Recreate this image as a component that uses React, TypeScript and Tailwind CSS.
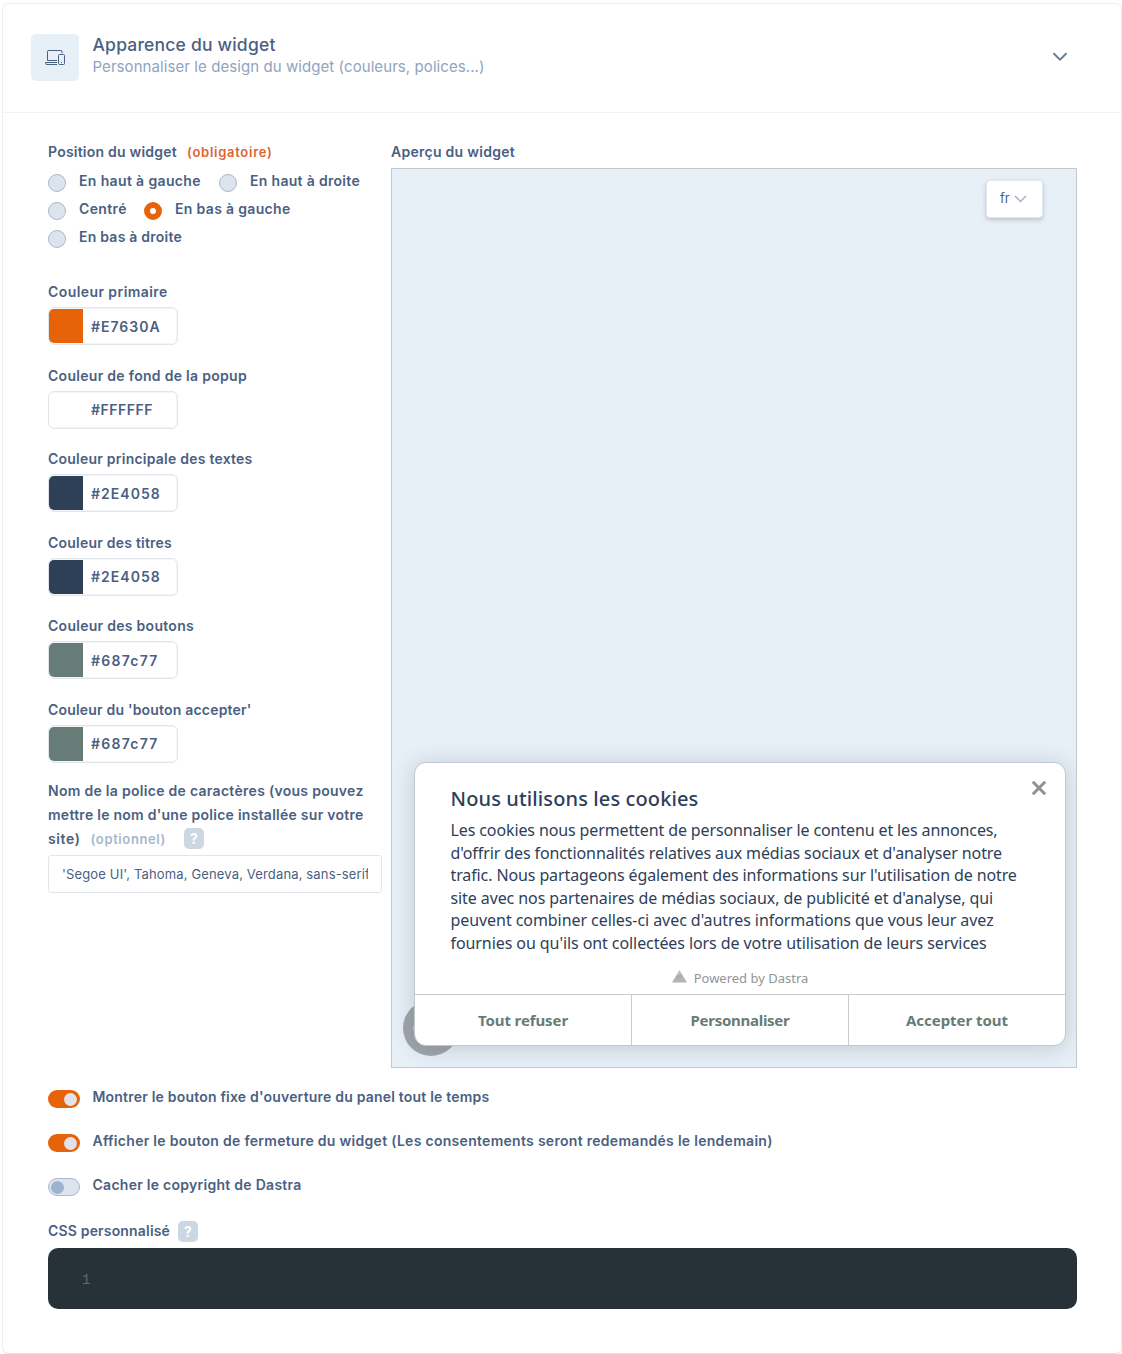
import React from "react";

const radioRows = [
  [
    { label: "En haut à gauche", cls: "w-[171px] tracking-[0.36px]", on: false },
    { label: "En haut à droite", cls: "w-[150px] tracking-[0.31px]", on: false },
  ],
  [
    { label: "Centré", cls: "w-[96px] tracking-[0.38px]", on: false },
    { label: "En bas à gauche", cls: "w-[160px] tracking-[0.33px]", on: true },
  ],
  [{ label: "En bas à droite", cls: "w-[160px] tracking-[0.23px]", on: false }],
];

const colors = [
  { label: "Couleur primaire", cls: "tracking-[0.42px]", hex: "#E7630A", swatch: "bg-[#e7630a]", hexCls: "tracking-[1px]" },
  { label: "Couleur de fond de la popup", cls: "tracking-[0.29px]", hex: "#FFFFFF", swatch: "bg-white", hexCls: "tracking-[0.5px]" },
  { label: "Couleur principale des textes", cls: "tracking-[0.23px]", hex: "#2E4058", swatch: "bg-[#2e4058]", hexCls: "tracking-[1.05px]" },
  { label: "Couleur des titres", cls: "tracking-[0.22px]", hex: "#2E4058", swatch: "bg-[#2e4058]", hexCls: "tracking-[1.05px]" },
  { label: "Couleur des boutons", cls: "tracking-[0.28px]", hex: "#687c77", swatch: "bg-[#687c77]", hexCls: "tracking-[1.25px]" },
  { label: "Couleur du 'bouton accepter'", cls: "tracking-[0.19px]", hex: "#687c77", swatch: "bg-[#687c77]", hexCls: "tracking-[1.25px]" },
];

const cookieLines = [
  { text: "Les cookies nous permettent de personnaliser le contenu et les annonces,", cls: "tracking-[-0.117px]" },
  { text: "d'offrir des fonctionnalités relatives aux médias sociaux et d'analyser notre", cls: "tracking-[-0.105px]" },
  { text: "trafic. Nous partageons également des informations sur l'utilisation de notre", cls: "tracking-[-0.112px]" },
  { text: "site avec nos partenaires de médias sociaux, de publicité et d'analyse, qui", cls: "tracking-[-0.095px]" },
  { text: "peuvent combiner celles-ci avec d'autres informations que vous leur avez", cls: "tracking-[-0.065px]" },
  { text: "fournies ou qu'ils ont collectées lors de votre utilisation de leurs services", cls: "tracking-[-0.08px]" },
];

const toggles = [
  { label: "Montrer le bouton fixe d'ouverture du panel tout le temps", cls: "tracking-[0.2px]", on: true },
  { label: "Afficher le bouton de fermeture du widget (Les consentements seront redemandés le lendemain)", cls: "tracking-[0.29px]", on: true },
  { label: "Cacher le copyright de Dastra", cls: "tracking-[0.27px]", on: false },
];

function Help({ className }: { className: string }) {
  return (
    <span className={`inline-flex h-[21px] w-5 items-center justify-center rounded-[5px] bg-[#cdd6e3] text-[14px] font-bold text-white ${className}`}>
      ?
    </span>
  );
}

function DevicesIcon() {
  return (
    <svg width="22" height="18" viewBox="0 0 22 18" fill="none" stroke="#4a6082" strokeWidth="1">
      <path d="M18 4.2V2.6Q18 1.5 17 1.5H4Q3.5 1.5 3.5 2.6V11.5H13" />
      <path d="M13 13.5H1.5V14.2Q1.5 15.5 3 15.5H13" />
      <rect x="14.5" y="5.5" width="6" height="10" rx="1" />
      <path d="M17 13.5H18" />
    </svg>
  );
}

function Header() {
  return (
    <header className="flex h-[109px] items-start border-b border-[#f1f2f4] pl-7 pt-[30px]">
      <div className="flex h-[47px] w-12 items-center justify-center rounded-[5px] bg-[#e7eff7]">
        <DevicesIcon />
      </div>
      <div className="-mt-px ml-[13.5px] whitespace-nowrap">
        <h1 className="h-[23px] text-[17.5px] font-medium leading-[23px] tracking-[0.2px]">Apparence du widget</h1>
        <p className="text-[15px] font-normal leading-[21px] tracking-[0.076px] text-[#91a3c0]">
          Personnaliser le design du widget (couleurs, polices...)
        </p>
      </div>
      <svg className="ml-auto mr-[53px] mt-[18px]" width="16" height="10" viewBox="0 0 16 10" fill="none" stroke="#6b7a99" strokeWidth="2">
        <path d="M1.5 1.2L8 7.7L14.5 1.2" />
      </svg>
    </header>
  );
}

function Settings() {
  return (
    <div className="w-[343px] shrink-0 whitespace-nowrap">
      <div className="flex h-[30px] pt-px leading-6">
        <span className="tracking-[0.22px]">Position du widget</span>
        <span className="ml-[10px] text-[13px] tracking-[0.72px] text-[#dc6530]">(obligatoire)</span>
      </div>
      {radioRows.map((row, i) => (
        <div key={i} className="flex h-7">
          {row.map((r) => (
            <label key={r.label} className={`flex items-center ${r.cls}`}>
              {r.on ? (
                <span className="size-[18px] shrink-0 rounded-full border-[6px] border-[#e7630a] bg-white" />
              ) : (
                <span className="size-[18px] shrink-0 rounded-full border border-[#a9b9ce] bg-[#dde4ee]" />
              )}
              <span className="mb-[5px] ml-[13px]">{r.label}</span>
            </label>
          ))}
        </div>
      ))}
      <div className="mt-[27px]">
        {colors.map((c) => (
          <div key={c.label} className="h-[83.5px]">
            <div className={`h-[27.4px] leading-6 ${c.cls}`}>{c.label}</div>
            <div className="flex h-[38px] w-[130px] items-center overflow-hidden rounded-[6px] border border-[#e1e6ed] bg-white shadow-[inset_0_0_0_1px_#f3f5f8]">
              <span className={`h-[34px] w-[34px] rounded-l-[5px] ${c.swatch}`} />
              <span className={`ml-2 text-[14px] ${c.hexCls}`}>{c.hex}</span>
            </div>
          </div>
        ))}
      </div>
      <div className="-mt-[2px] leading-6">
        <div className="tracking-[0.29px]">Nom de la police de caractères (vous pouvez</div>
        <div className="tracking-[0.26px]">mettre le nom d'une police installée sur votre</div>
        <div className="flex h-6 items-center">
          <span className="tracking-[0.6px]">site)</span>
          <span className="ml-[10px] text-[13px] tracking-[0.62px] text-[#a5b6cc]">(optionnel)</span>
          <Help className="-mt-px ml-[18px]" />
        </div>
      </div>
      <div className="mt-1 h-[38px] w-[334px] rounded-[3px] border border-[#e2e6ec]">
        <input
          className="h-full w-full bg-transparent px-[13px] text-[13px] font-normal tracking-[0.146px] outline-none"
          defaultValue="'Segoe UI', Tahoma, Geneva, Verdana, sans-serif"
        />
      </div>
    </div>
  );
}

function CookiePopup() {
  return (
    <div className="absolute bottom-[21px] left-[22px] flex h-[284px] w-[652px] flex-col overflow-hidden rounded-[12px] border border-[#c3c8cc] bg-white font-['Noto_Sans',sans-serif] font-normal text-[#2e4058] shadow-[0_2px_22px_rgba(60,80,100,0.22)]">
      <svg className="absolute right-[18px] top-[17px]" width="16" height="16" viewBox="0 0 16 16" fill="none" stroke="#8e9296" strokeWidth="3">
        <path d="M1.8 1.8L14.2 14.2M14.2 1.8L1.8 14.2" />
      </svg>
      <div className="h-[231px] whitespace-nowrap pl-[35.5px] pt-[21.5px]">
        <h2 className="h-[34.5px] text-[20px] font-medium leading-[28px] tracking-[0.12px]">Nous utilisons les cookies</h2>
        <div className="text-[16px] leading-[22.5px]">
          {cookieLines.map((l) => (
            <div key={l.text} className={l.cls}>{l.text}</div>
          ))}
        </div>
      </div>
      <div className="-mt-[27px] flex h-[27px] items-start justify-center text-[13px] leading-[22px] text-[#929496]">
        <svg className="mr-[7px] mt-[3px]" width="15" height="13" viewBox="0 0 15 13">
          <path d="M7.5 0L11.2 6.3H3.7Z" fill="#bfc1c3" />
          <path d="M3.7 6.3L9 4L12 7.8L3 9Z" fill="#a9abad" />
          <path d="M3 7.6L11.6 6.8L15 12.6H0Z" fill="#b2b4b6" />
        </svg>
        Powered by Dastra
      </div>
      <div className="flex h-[51px] border-t border-[#c8cccf] text-[15px] font-bold text-[#687c77]">
        <button className="w-[217px] border-r border-[#c8cccf] tracking-[-0.1px]">Tout refuser</button>
        <button className="w-[217px] border-r border-[#c8cccf] tracking-[-0.27px]">Personnaliser</button>
        <button className="w-[216px] tracking-[-0.04px]">Accepter tout</button>
      </div>
    </div>
  );
}

function Preview() {
  return (
    <div className="w-[686px]">
      <div className="h-[29px] pt-px leading-6 tracking-[0.27px]">Aperçu du widget</div>
      <div className="relative h-[900px] overflow-hidden border border-[#c3c9cf] bg-[#e7eff7]">
        <div className="absolute right-[33px] top-[11px] flex h-[38px] w-[57px] items-center rounded-[4px] border border-[#e3e8ef] bg-white pl-[13px] text-[13px] font-normal shadow-[0_2px_4px_rgba(50,60,80,0.25)]">
          fr
          <svg className="ml-[4px]" width="13" height="8" viewBox="0 0 13 8" fill="none" stroke="#a3b3c4" strokeWidth="1.5">
            <path d="M1 1L6.5 6.5L12 1" />
          </svg>
        </div>
        <div className="absolute bottom-[11px] left-[11px] flex size-[56px] items-center rounded-full bg-[#9fa4a8] pl-[10px]">
          <span className="size-[9px] rounded-full bg-[#cdd1d4]" />
        </div>
        <CookiePopup />
      </div>
    </div>
  );
}

export default function App() {
  return (
    <main className="h-[1354px] overflow-hidden bg-white pl-[2px] pt-[3px] font-['Inter',sans-serif] text-[14px] font-semibold text-[#4b5f82]">
      <section className="h-[1351px] rounded-[6px] border border-[#eceef0] border-b-[#dfe1e4]">
        <Header />
        <div className="ml-[45px] mt-[26px] flex h-[929px]">
          <Settings />
          <Preview />
        </div>
        <div className="ml-[45px] mt-[16px]">
          {toggles.map((t) => (
            <label key={t.label} className="flex h-11 items-start">
              {t.on ? (
                <span className="mt-[6px] flex h-[18px] w-8 items-center justify-end rounded-full bg-[#e7630a] pr-[3px]">
                  <span className="size-[13px] rounded-full bg-[#e0e3ec]" />
                </span>
              ) : (
                <span className="mt-[6px] flex h-[18px] w-8 items-center rounded-full border border-[#a9b9ce] bg-[#dde4ee] pl-[2px]">
                  <span className="size-[13px] rounded-full bg-[#9db3cf]" />
                </span>
              )}
              <span className={`ml-[12.5px] mt-px leading-6 ${t.cls}`}>{t.label}</span>
            </label>
          ))}
          <div className="flex h-[32px] items-start pt-[5px] leading-[21px]">
            <span className="-mt-px tracking-[0.17px]">CSS personnalisé</span>
            <Help className="ml-2" />
          </div>
          <div className="h-[61px] w-[1029px] rounded-[10px] bg-[#263238] pl-[34px] pt-[22px] font-['Liberation_Mono',monospace] text-[14px] font-normal leading-[21px] text-[#546e7a]">
            1
          </div>
        </div>
      </section>
    </main>
  );
}
